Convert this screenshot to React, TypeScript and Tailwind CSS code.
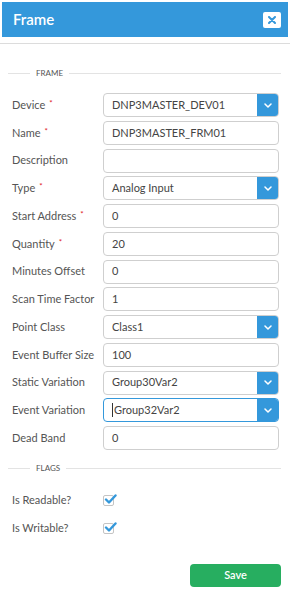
import React from "react";

type Field = {
  label: string;
  value: string;
  required?: boolean;
  select?: boolean;
  focused?: boolean;
};

const fields: Field[] = [
  { label: "Device", value: "DNP3MASTER_DEV01", required: true, select: true },
  { label: "Name", value: "DNP3MASTER_FRM01", required: true },
  { label: "Description", value: "" },
  { label: "Type", value: "Analog Input", required: true, select: true },
  { label: "Start Address", value: "0", required: true },
  { label: "Quantity", value: "20", required: true },
  { label: "Minutes Offset", value: "0" },
  { label: "Scan Time Factor", value: "1" },
  { label: "Point Class", value: "Class1", select: true },
  { label: "Event Buffer Size", value: "100" },
  { label: "Static Variation", value: "Group30Var2", select: true },
  { label: "Event Variation", value: "Group32Var2", select: true, focused: true },
  { label: "Dead Band", value: "0" },
];

function Legend({ title }: { title: string }) {
  return (
    <div className="flex h-[10px] items-center pl-[8px] pr-[9px]">
      <div className="h-px w-[22px] bg-[#e3e3e3]" />
      <span className="px-[6px] text-[8px] leading-none text-[#555]">{title}</span>
      <div className="h-px flex-1 bg-[#e3e3e3]" />
    </div>
  );
}

function Chevron() {
  return (
    <svg width="8" height="5" viewBox="0 0 8 5" fill="none">
      <path d="M1 1l3 3 3-3" stroke="white" strokeWidth="1.5" strokeLinecap="round" strokeLinejoin="round" />
    </svg>
  );
}

function Check() {
  return (
    <div className="relative h-[11px] w-[11px] rounded-[2px] border border-[#c4c4c4] bg-white">
      <svg className="absolute -top-[2px] left-[0px]" width="13" height="11" viewBox="0 0 13 11" fill="none">
        <path d="M2 5.5l3 3L11.5 1.5" stroke="#3498db" strokeWidth="2.4" strokeLinecap="round" strokeLinejoin="round" />
      </svg>
    </div>
  );
}

export default function App() {
  return (
    <div className="min-h-[600px] w-[290px] bg-white font-['Lato',sans-serif]">
      <div className="border-b border-[#dcdcdc] p-[2px] pb-[6px]">
        <div className="flex h-[35px] items-center justify-between bg-[#3498db] pl-[11px] pr-[7px]">
          <span className="text-[15px] font-semibold text-white">Frame</span>
          <button className="flex h-[16px] w-[18px] items-center justify-center rounded-[2px] bg-white">
            <svg width="8" height="8" viewBox="0 0 8 8">
              <path d="M1 1l6 6M7 1L1 7" stroke="#3498db" strokeWidth="2" strokeLinecap="round" />
            </svg>
          </button>
        </div>
      </div>

      <div className="mt-[24px]">
        <Legend title="FRAME" />
      </div>

      <div className="mt-[15px] flex flex-col gap-[3.75px] pl-[12px]">
        {fields.map((f) => (
          <div key={f.label} className="flex h-[24px] items-center">
            <div className="w-[91px] text-[11px] text-[#555]">
              {f.label}
              {f.required && <span className="ml-[4px] align-top text-[8px] text-[#e01b1b]">*</span>}
            </div>
            <div
              className={
                "flex h-[24px] w-[176px] items-center overflow-hidden rounded-[4px] border " +
                (f.focused ? "border-[#3498db]" : "border-[#cfcfcf]")
              }
            >
              <div className="flex flex-1 items-center pl-[8px] text-[11px] text-[#444]">
                {f.focused && <span className="mr-px h-[14px] w-px bg-[#333]" />}
                {f.value}
              </div>
              {f.select && (
                <div className="-mr-px flex h-[24px] w-[22px] items-center justify-center bg-[#3498db]">
                  <Chevron />
                </div>
              )}
            </div>
          </div>
        ))}
      </div>

      <div className="mt-[13px]">
        <Legend title="FLAGS" />
      </div>

      <div className="mt-[15px] flex flex-col gap-[4px] pl-[12px]">
        {["Is Readable?", "Is Writable?"].map((l) => (
          <div key={l} className="flex h-[24px] items-center">
            <div className="w-[91px] text-[11px] text-[#555]">{l}</div>
            <Check />
          </div>
        ))}
      </div>

      <div className="mt-[24px] flex justify-end pr-[9px]">
        <button className="h-[23px] w-[91px] rounded-[4px] bg-[#27ae60] text-[11px] font-semibold text-white">
          Save
        </button>
      </div>
    </div>
  );
}
